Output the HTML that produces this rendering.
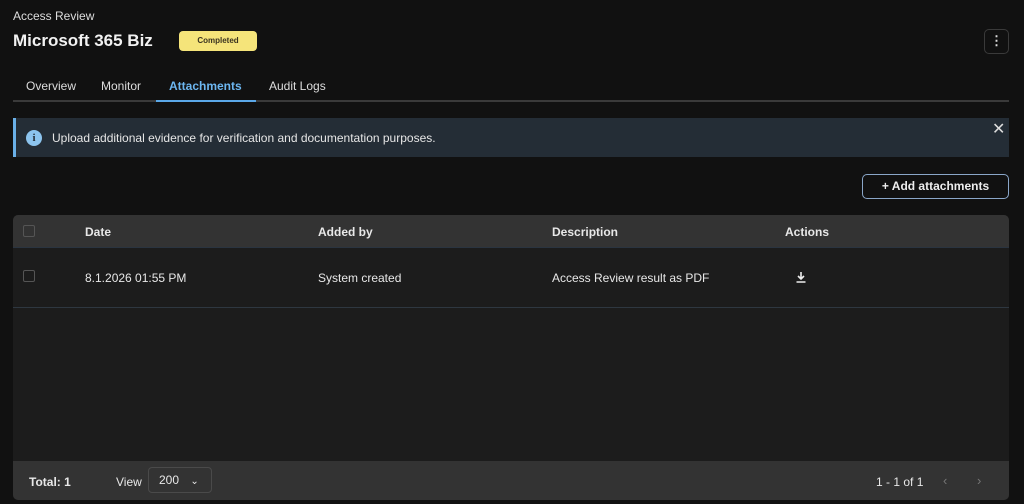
<!DOCTYPE html>
<html><head><style>
*{box-sizing:border-box;margin:0;padding:0}
body{width:1024px;height:504px;background:#111;font-family:"Liberation Sans",sans-serif;color:#e8e8e8;position:relative;overflow:hidden}
.a{position:absolute}
.cb{position:absolute;width:12px;height:12px;border:1.5px solid #555;border-radius:2px}
</style></head><body>
<div class="a" style="left:13px;top:9px;font-size:12px;color:#ddd">Access Review</div>
<div class="a" style="left:13px;top:31px;font-size:17px;font-weight:bold;color:#f2f2f2">Microsoft 365 Biz</div>
<div class="a" style="left:179px;top:31px;width:78px;height:20px;background:#f5e47a;border-radius:4px;color:#3a3320;font-size:8px;font-weight:bold;text-align:center;line-height:20px">Completed</div>
<div class="a" style="left:984px;top:29px;width:25px;height:25px;border:1px solid #3a3a3a;border-radius:5px;color:#ddd;font-size:13px;font-weight:bold;text-align:center;line-height:22px">⋮</div>
<div class="a" style="left:13px;top:100px;width:996px;height:2px;background:#3a3a3a"></div>
<div class="a" style="left:156px;top:100px;width:100px;height:2px;background:#5ba8e8"></div>
<div class="a" style="left:26px;top:79px;font-size:12px;color:#ddd">Overview</div>
<div class="a" style="left:101px;top:79px;font-size:12px;color:#ddd">Monitor</div>
<div class="a" style="left:169px;top:79px;font-size:12px;font-weight:bold;color:#6cb6f0">Attachments</div>
<div class="a" style="left:269px;top:79px;font-size:12px;color:#ddd">Audit Logs</div>
<div class="a" style="left:13px;top:118px;width:996px;height:39px;background:#242d36;border-left:3px solid #6ab0e8"></div>
<div class="a" style="left:26px;top:130px;width:16px;height:16px;border-radius:50%;background:#8cc4ee;color:#242d36;font-size:11px;font-weight:bold;text-align:center;line-height:16px;font-family:'Liberation Serif',serif">i</div>
<div class="a" style="left:52px;top:131px;font-size:12px;color:#e6e6e6">Upload additional evidence for verification and documentation purposes.</div>
<div class="a" style="left:992px;top:119px;font-size:16px;color:#ddd">✕</div>
<div class="a" style="left:862px;top:174px;width:147px;height:25px;border:1.5px solid #8aa6c8;border-radius:5px;font-size:12px;font-weight:bold;text-align:center;line-height:22px;color:#eee">+ Add attachments</div>
<div class="a" style="left:13px;top:215px;width:996px;height:285px;background:#1c1c1c;border-radius:5px;overflow:hidden">
 <div class="a" style="left:0;top:0;width:996px;height:33px;background:#333;border-bottom:1px solid #2a3440"></div>
 <div class="cb" style="left:10px;top:10px"></div>
 <div class="a" style="left:72px;top:10px;font-size:12px;font-weight:bold">Date</div>
 <div class="a" style="left:305px;top:10px;font-size:12px;font-weight:bold">Added by</div>
 <div class="a" style="left:539px;top:10px;font-size:12px;font-weight:bold">Description</div>
 <div class="a" style="left:772px;top:10px;font-size:12px;font-weight:bold">Actions</div>
 <div class="cb" style="left:10px;top:55px"></div>
 <div class="a" style="left:72px;top:56px;font-size:12px">8.1.2026 01:55 PM</div>
 <div class="a" style="left:305px;top:56px;font-size:12px">System created</div>
 <div class="a" style="left:539px;top:56px;font-size:12px">Access Review result as PDF</div>
 <svg class="a" style="left:781px;top:55px" width="14" height="14" viewBox="0 0 14 14"><path d="M7 2v7M4 6l3 3 3-3M2.5 12h9" stroke="#eee" stroke-width="1.6" fill="none"/></svg>
 <div class="a" style="left:0;top:92px;width:996px;height:1px;background:#2e3740"></div>
 <div class="a" style="left:0;top:246px;width:996px;height:39px;background:#333"></div>
 <div class="a" style="left:16px;top:260px;font-size:12px;font-weight:bold">Total: 1</div>
 <div class="a" style="left:103px;top:260px;font-size:12px">View</div>
 <div class="a" style="left:135px;top:252px;width:64px;height:26px;border:1px solid #4a4a4a;border-radius:4px;font-size:12px;line-height:24px;padding-left:10px">200 <span style="margin-left:8px;font-size:10px">⌄</span></div>
 <div class="a" style="left:863px;top:260px;font-size:12px">1 - 1 of 1</div>
 <div class="a" style="left:930px;top:258px;font-size:13px;color:#777">‹</div>
 <div class="a" style="left:964px;top:258px;font-size:13px;color:#777">›</div>
</div>
</body></html>
